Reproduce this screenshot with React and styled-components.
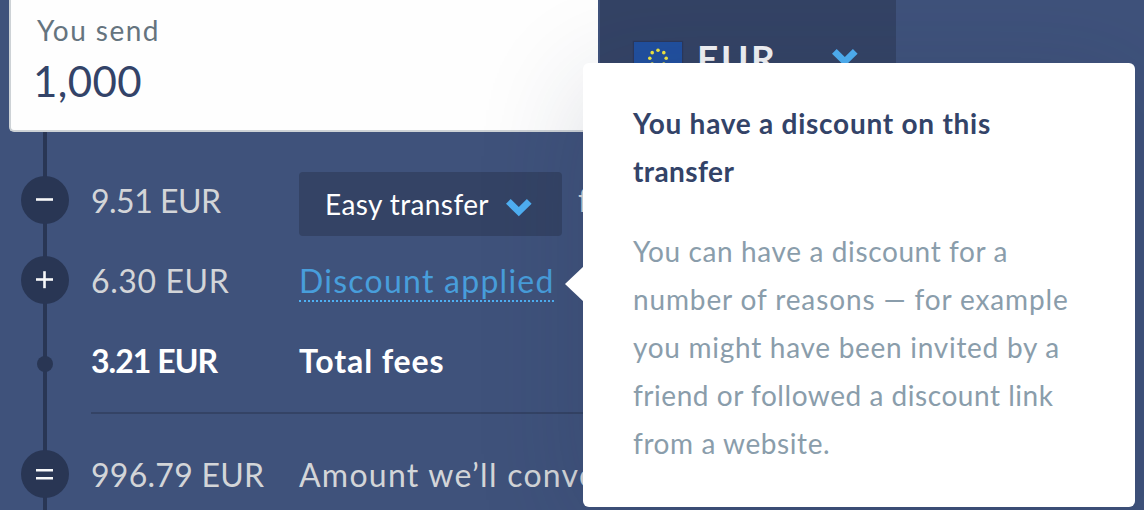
import React from "react";
import styled, { createGlobalStyle } from "styled-components";

const GlobalStyle = createGlobalStyle`
  * {
    box-sizing: border-box;
  }

  body {
    margin: 0;
    font-family: "Lato", sans-serif;
    background: #3f517a;
  }
`;

const Page = styled.div`
  position: relative;
  width: 1144px;
  height: 510px;
  overflow: hidden;
  background: #3f527b;
`;

const InputRow = styled.div`
  display: flex;
  gap: 2px;
  height: 132px;
  padding-left: 9px;
`;

const AmountField = styled.div`
  width: 589px;
  padding: 14px 0 0 26px;
  background: #fefefe;
  border-left: 2px solid #cdd2d6;
  border-bottom: 2px solid #cdd2d6;
  border-bottom-left-radius: 5px;
`;

const Text = styled.div`
  font-size: ${(props) => props.$size || 32}px;
  font-weight: ${(props) => props.$weight || 400};
  line-height: ${(props) => props.$line || "1.2"};
  letter-spacing: ${(props) => props.$spacing || 0}px;
  color: ${(props) => props.$color || "#d3d5d8"};
  white-space: nowrap;
`;

const FieldValue = styled(Text)`
  margin: 8px 0 0 -4px;
`;

const CurrencySelect = styled.div`
  display: flex;
  align-items: center;
  width: 296px;
  height: 116px;
  padding-left: 34px;
  background: #344365;
`;

const Flag = styled.svg`
  margin-right: 15px;
  box-shadow: 0 0 1px 1px rgba(30, 40, 80, 0.4);
`;

const CurrencyCode = styled(Text)`
  width: 135px;
`;

const Breakdown = styled.div`
  height: 378px;
  padding: 28px 0 0 21px;
  background: linear-gradient(#293654, #293654) 43px 0 / 4px 100% no-repeat;
`;

const Row = styled.div`
  display: grid;
  grid-template-columns: 48px 208px 1fr;
  align-items: center;
  height: 80px;

  > :nth-child(2),
  > :nth-child(3) {
    margin-left: 22px;
  }

  > ${Text} {
    padding-top: 2px;
  }
`;

const Marker = styled.div`
  display: flex;
  align-items: center;
  justify-content: center;
  width: 48px;
  height: 48px;
  padding-right: 2px;
  border-radius: 50%;
  background: #293654;
`;

const Dot = styled.div`
  justify-self: center;
  width: 16px;
  height: 16px;
  margin-top: 8px;
  border-radius: 50%;
  background: #293654;
`;

const Divider = styled.div`
  width: 1000px;
  height: 2px;
  margin: 12px 0 20px 70px;
  background: #344365;
`;

const MethodCell = styled.div`
  display: flex;
  align-items: center;
`;

const MethodSelect = styled.div`
  display: flex;
  align-items: center;
  justify-content: space-between;
  width: 263px;
  height: 64px;
  margin: 8px 16px 0 0;
  padding: 2px 30px 0 26px;
  border-radius: 4px;
  background: #344365;

  svg {
    margin-top: 5px;
  }
`;

const DiscountLink = styled.a`
  justify-self: start;
  width: 255px;
  height: 42px;
  margin-top: 2px;
  padding-top: 2px;
  border-bottom: 2px dotted #4fb0f3;
`;

const Popover = styled.div`
  position: absolute;
  top: 63px;
  left: 583px;
  width: 552px;
  height: 444px;
  padding: 36px 50px;
  border-radius: 6px;
  background: #fff;
  box-shadow: 0 20px 110px rgba(30, 42, 75, 0.16);
`;

const Arrow = styled.svg`
  position: absolute;
  top: 203px;
  left: -18px;
`;

const PopoverBody = styled.div`
  margin-top: 32px;
`;

const CHEVRON = "0,4.7 4.7,0 12.8,8 20.9,0 25.6,4.7 12.8,17.2";

function Chevron() {
  return (
    <svg width="26" height="18" viewBox="0 0 26 18">
      <polygon points={CHEVRON} fill="#4fb0f3" />
    </svg>
  );
}

function EuFlag() {
  const stars = Array.from({ length: 8 }, (_, i) => {
    const angle = (i * Math.PI) / 4;
    return [24 + 8.2 * Math.sin(angle), 16.3 - 8 * Math.cos(angle)];
  });
  return (
    <Flag width="48" height="33" viewBox="0 0 48 33">
      <rect width="48" height="33" fill="#21509f" />
      {stars.map(([cx, cy], i) => (
        <circle key={i} cx={cx} cy={cy} r="1.8" fill="#f3e83f" />
      ))}
    </Flag>
  );
}

function Sign({ type }) {
  return (
    <Marker>
      <svg width="18" height="18" viewBox="0 0 18 18" fill="#f7f8f9">
        {type === "equals" ? (
          <>
            <rect x="1" y="4" width="17" height="2.5" />
            <rect x="1" y="12" width="17" height="2.5" />
          </>
        ) : (
          <rect x="1" y="7.2" width="17" height="2.6" />
        )}
        {type === "plus" && <rect x="8.2" y="0.2" width="2.6" height="17" />}
      </svg>
    </Marker>
  );
}

const bodyLines = [
  ["You can have a discount for a", 0.62],
  ["number of reasons — for example", 0.87],
  ["you might have been invited by a", 0.72],
  ["friend or followed a discount link", 0.54],
  ["from a website.", 0.58],
];

export default function App() {
  return (
    <Page>
      <GlobalStyle />
      <InputRow>
        <AmountField>
          <Text $size={28} $spacing={1.45} $color="#65747e">
            You send
          </Text>
          <FieldValue $size={42} $spacing={0.4} $color="#334368">
            1,000
          </FieldValue>
        </AmountField>
        <CurrencySelect>
          <EuFlag />
          <CurrencyCode $size={37} $weight={700} $spacing={2.6} $color="#f3f4f6">
            EUR
          </CurrencyCode>
          <Chevron />
        </CurrencySelect>
      </InputRow>

      <Breakdown>
        <Row>
          <Sign type="minus" />
          <Text $spacing={-0.5}>9.51 EUR</Text>
          <MethodCell>
            <MethodSelect>
              <Text $size={28} $spacing={0.4} $color="#fff">
                Easy transfer
              </Text>
              <Chevron />
            </MethodSelect>
            <Text>fee</Text>
          </MethodCell>
        </Row>
        <Row>
          <Sign type="plus" />
          <Text $spacing={0.6}>6.30 EUR</Text>
          <DiscountLink>
            <Text $spacing={1.25} $color="#489edb">
              Discount applied
            </Text>
          </DiscountLink>
        </Row>
        <Row>
          <Dot />
          <Text $weight={700} $spacing={-0.95} $color="#fff">
            3.21 EUR
          </Text>
          <Text $weight={700} $spacing={0.9} $color="#fff">
            Total fees
          </Text>
        </Row>
        <Divider />
        <Row>
          <Sign type="equals" />
          <Text $spacing={0.27}>996.79 EUR</Text>
          <Text $spacing={1.25}>Amount we’ll convert</Text>
        </Row>
      </Breakdown>

      <Popover>
        <Arrow width="19" height="36" viewBox="0 0 19 36">
          <polygon points="19,0 19,36 0,18" fill="#fff" />
        </Arrow>
        <Text $size={28} $weight={700} $line="48px" $spacing={0.74} $color="#334368">
          You have a discount on this
        </Text>
        <Text $size={28} $weight={700} $line="48px" $spacing={0.4} $color="#334368">
          transfer
        </Text>
        <PopoverBody>
          {bodyLines.map(([line, spacing]) => (
            <Text key={line} $size={28} $line="48px" $spacing={spacing} $color="#8a9dab">
              {line}
            </Text>
          ))}
        </PopoverBody>
      </Popover>
    </Page>
  );
}
